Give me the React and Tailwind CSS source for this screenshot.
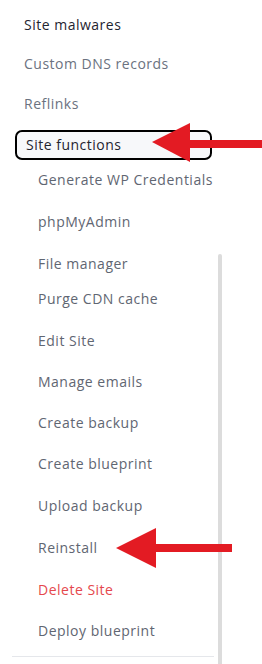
import React from "react";

const topItems = [
  { label: "Site malwares", cls: "h-[39px] text-[#1f2430]" },
  { label: "Custom DNS records", cls: "h-[40px] text-[#6b7280]" },
  { label: "Reflinks", cls: "h-[36px] text-[#6b7280]" },
];

const subItems = [
  { label: "Generate WP Credentials", cls: "h-[42px]" },
  { label: "phpMyAdmin", cls: "h-[42px]" },
  { label: "File manager", cls: "h-[35px]" },
  { label: "Purge CDN cache", cls: "h-[42px]" },
  { label: "Edit Site", cls: "h-[41px]" },
  { label: "Manage emails", cls: "h-[41px]" },
  { label: "Create backup", cls: "h-[41px]" },
  { label: "Create blueprint", cls: "h-[42px]" },
  { label: "Upload backup", cls: "h-[42px]" },
  { label: "Reinstall", cls: "h-[42px]" },
  { label: "Delete Site", cls: "h-[41px]", danger: true },
  { label: "Deploy blueprint", cls: "h-[35px]" },
];

export default function App() {
  return (
    <div
      className="relative w-[262px] h-[664px] overflow-hidden bg-white"
      style={{ fontFamily: '"Open Sans", "Liberation Sans", sans-serif' }}
    >
      <div className="flex h-full">
        <nav className="w-[214px] pl-[12px] pt-[15px] flex flex-col text-[14px] leading-[20px] tracking-[0.5px] whitespace-nowrap">
          {topItems.map((item) => (
            <div key={item.label} className={`pl-[12px] ${item.cls}`}>
              {item.label}
            </div>
          ))}

          <div className="h-[40px]">
            <div className="ml-[3px] w-[197px] h-[30px] flex items-center pl-[9px] border-2 border-black rounded-[7px] bg-[#f7f8fa] text-[#1f2430]">
              Site functions
            </div>
          </div>

          {subItems.map((item) => (
            <div
              key={item.label}
              className={`pl-[26px] ${item.cls} ${item.danger ? "text-[#e5484d]" : "text-[#5f6672]"}`}
            >
              {item.label}
            </div>
          ))}

          <div className="h-px bg-[#e5e7eb]" />
        </nav>

        <div className="ml-[4px] mt-[254px] w-[4px] bg-[#dcdcdc] rounded-t-sm" />
      </div>

      {/* annotation arrows */}
      <svg
        className="absolute inset-0 pointer-events-none"
        width="262"
        height="664"
        viewBox="0 0 262 664"
      >
        <polygon points="152,142 190,123 190,140 262,140 262,148 190,148 190,162" fill="#e31b23" />
        <polygon points="116,548 156,528 156,544 232,544 232,552 156,552 156,568" fill="#e31b23" />
      </svg>
    </div>
  );
}
